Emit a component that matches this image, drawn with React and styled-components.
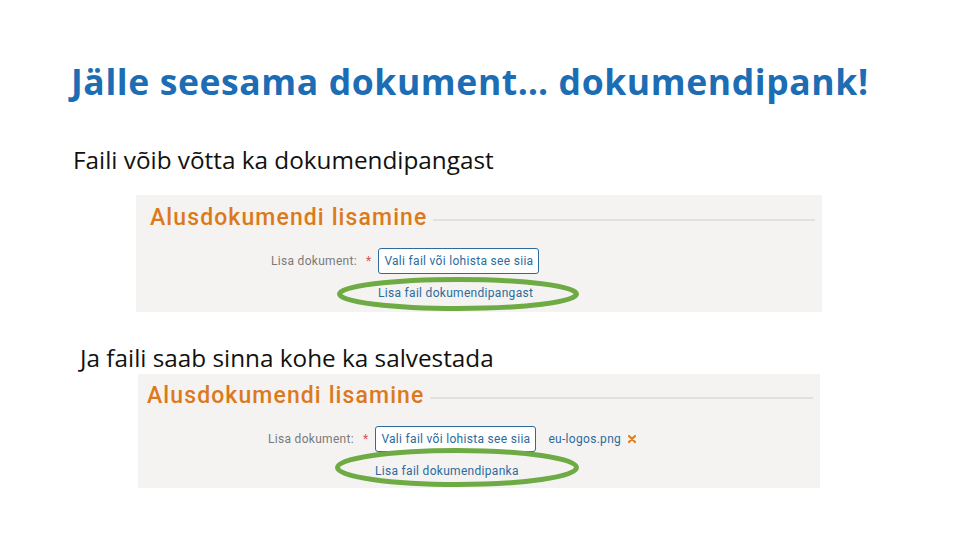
import React from 'react';
import styled, { createGlobalStyle } from 'styled-components';

const GlobalStyle = createGlobalStyle`
    html, body {
        margin: 0;
        padding: 0;
        background: #ffffff;
    }
`;

const panels = [
    {
        caption: 'Faili võib võtta ka dokumendipangast',
        captionIndent: 73,
        captionTop: 39,
        left: 136,
        width: 686,
        height: 117,
        top: 19,
        padTop: 9,
        padLeft: 14,
        fileName: null,
        link: 'Lisa fail dokumendipangast',
        ring: { left: -41, top: -6, width: 242, height: 34 },
    },
    {
        caption: 'Ja faili saab sinna kohe ka salvestada',
        captionIndent: 80,
        captionTop: 30,
        left: 138,
        width: 682,
        height: 114,
        top: 0,
        padTop: 8,
        padLeft: 9,
        fileName: 'eu-logos.png',
        link: 'Lisa fail dokumendipanka',
        ring: { left: -40, top: -13, width: 244, height: 39 },
    },
];

function App() {
    return (
        <>
            <GlobalStyle />
            <Slide>
                <Title>Jälle seesama dokument… dokumendipank!</Title>
                {panels.map((p, i) => (
                    <Section key={i}>
                        <Caption $indent={p.captionIndent} $top={p.captionTop}>{p.caption}</Caption>
                        <Panel
                            $left={p.left}
                            $width={p.width}
                            $height={p.height}
                            $top={p.top}
                            $padTop={p.padTop}
                            $padLeft={p.padLeft}
                        >
                            <PanelHeader>
                                <PanelTitle>Alusdokumendi lisamine</PanelTitle>
                                <Rule />
                            </PanelHeader>
                            <FieldRow>
                                <Label>Lisa dokument:</Label>
                                <Required>*</Required>
                                <FileButton>Vali fail või lohista see siia</FileButton>
                                {p.fileName && (
                                    <>
                                        <FileName>{p.fileName}</FileName>
                                        <Remove viewBox="0 0 8 8">
                                            <path d="M1 1 L7 7 M7 1 L1 7" stroke="#e0821f" strokeWidth="2.2" strokeLinecap="round" />
                                        </Remove>
                                    </>
                                )}
                            </FieldRow>
                            <LinkRow>
                                <BankLink>{p.link}</BankLink>
                                <Ring
                                    viewBox={`0 0 ${p.ring.width} ${p.ring.height}`}
                                    style={{
                                        left: p.ring.left,
                                        top: p.ring.top,
                                        width: p.ring.width,
                                        height: p.ring.height,
                                    }}
                                >
                                    <ellipse
                                        cx={p.ring.width / 2}
                                        cy={p.ring.height / 2}
                                        rx={p.ring.width / 2 - 2.5}
                                        ry={p.ring.height / 2 - 2.5}
                                        fill="none"
                                        stroke="#6eab44"
                                        strokeWidth="5"
                                    />
                                </Ring>
                            </LinkRow>
                        </Panel>
                    </Section>
                ))}
            </Slide>
        </>
    );
}

export default App;

const Slide = styled.div`
    width: 958px;
    height: 539px;
    box-sizing: border-box;
    padding-top: 57px;
    background: #ffffff;
    overflow: hidden;
`;

const Title = styled.h1`
    margin: 0 0 0 71px;
    font-family: "Open Sans", Lato, sans-serif;
    font-weight: 700;
    font-size: 35.5px;
    line-height: 48px;
    color: #1c6db3;
    letter-spacing: 0.6px;
    white-space: nowrap;
`;

const Section = styled.div`
    display: flex;
    flex-direction: column;
`;

const Caption = styled.div`
    margin: ${(p) => p.$top}px 0 0 ${(p) => p.$indent}px;
    font-family: "Open Sans", Lato, sans-serif;
    font-size: 24.3px;
    line-height: 32px;
    color: #111111;
    white-space: nowrap;
`;

const Panel = styled.div`
    margin: ${(p) => p.$top}px 0 0 ${(p) => p.$left}px;
    width: ${(p) => p.$width}px;
    height: ${(p) => p.$height}px;
    box-sizing: border-box;
    padding: ${(p) => p.$padTop}px 7px 0 ${(p) => p.$padLeft}px;
    background: #f4f3f2;
    font-family: Roboto, "Liberation Sans", sans-serif;
`;

const PanelHeader = styled.div`
    display: flex;
    align-items: center;
    gap: 6px;
`;

const PanelTitle = styled.div`
    font-size: 23px;
    font-weight: 500;
    line-height: 28px;
    letter-spacing: 1.1px;
    color: #dc7a1b;
    white-space: nowrap;
`;

const Rule = styled.div`
    flex: 1;
    height: 2px;
    margin-top: 4px;
    background: #e1e0df;
`;

const FieldRow = styled.div`
    display: flex;
    align-items: center;
    height: 26px;
    margin: 16px 0 0 121px;
    font-size: 12px;
    letter-spacing: 0.3px;
`;

const Label = styled.span`
    color: #7a7a7a;
`;

const Required = styled.span`
    margin-left: 9px;
    color: #d9534f;
`;

const FileButton = styled.div`
    margin-left: 7px;
    width: 161px;
    height: 26px;
    box-sizing: border-box;
    display: flex;
    align-items: center;
    justify-content: center;
    border: 1px solid #2c6b9c;
    border-radius: 3px;
    color: #2c6b9c;
    background: #ffffff;
    white-space: nowrap;
`;

const FileName = styled.span`
    margin-left: 12px;
    color: #2c6b9c;
`;

const Remove = styled.svg`
    margin-left: 7px;
    width: 8px;
    height: 8px;
`;

const LinkRow = styled.div`
    position: relative;
    margin: 9px 0 0 228px;
    width: 200px;
    height: 20px;
    display: flex;
    align-items: center;
    font-size: 12px;
    letter-spacing: 0.3px;
`;

const BankLink = styled.span`
    color: #2c6b9c;
    white-space: nowrap;
`;

const Ring = styled.svg`
    position: absolute;
    overflow: visible;
`;
